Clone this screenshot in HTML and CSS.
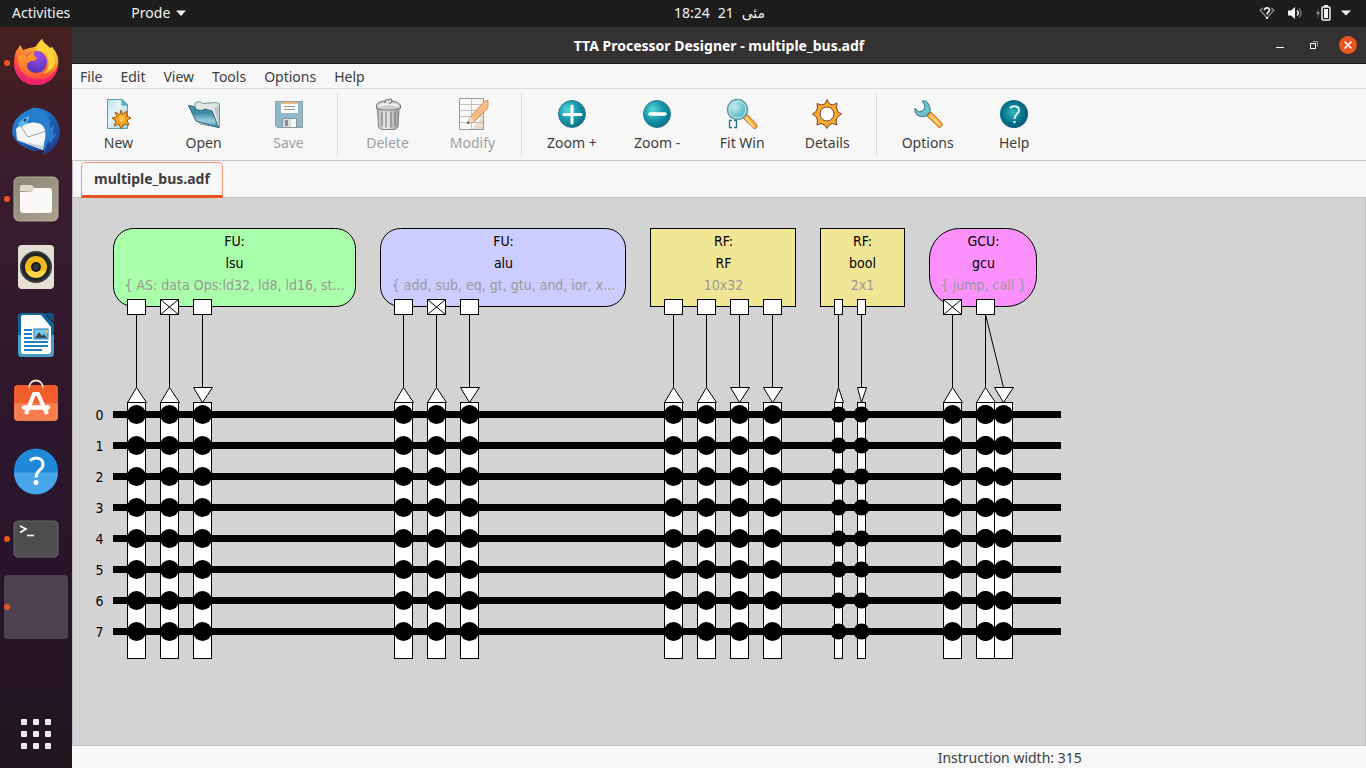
FILE: index.html
```html
<!DOCTYPE html>
<html lang="en">
<head>
<meta charset="utf-8">
<title>TTA Processor Designer - multiple_bus.adf</title>
<link rel="stylesheet" href="styles.css">
</head>
<body>
<div class="desktop">
  <header class="topbar">
    <div class="topbar-left">
      <button class="top-btn" type="button">Activities</button>
      <button class="top-btn app-menu" type="button">Prode
        <svg width="10" height="6" viewBox="0 0 10 6"><path d="M0 0.500h10L5 6z" fill="#f2f2f2"/></svg>
      </button>
    </div>
    <button class="top-btn clock" type="button"><span>18:24</span><span>21</span><span lang="ur">مئی</span></button>
    <button class="top-btn tray" type="button" aria-label="System menu">
      <svg width="16" height="16" viewBox="0 0 16 16" fill="none"><path d="M1 5Q8 0 15 5L8 13z" stroke="#8c8c8c" stroke-width="1.300"/><path d="M5.500 5.200C5.500 2 10.800 2.300 10.500 5.200C10.300 7 8 7 8 9.500" stroke="#1d1d1d" stroke-width="4"/><path d="M5.500 5.200C5.500 2 10.800 2.300 10.500 5.200C10.300 7 8 7 8 9.500" stroke="#eee" stroke-width="1.700"/><path d="M7 12h2v2H7z" fill="#eee"/></svg>
      <svg width="16" height="16" viewBox="0 0 16 16" fill="none"><path d="M1 5.500h3L8 2v12l-4-3.500H1z" fill="#f2f2f2"/><path d="M10 5.500q2.500 2.500 0 5" stroke="#f2f2f2" stroke-width="1.500"/><path d="M12 3.500q4 4.500 0 9" stroke="#777" stroke-width="1.400"/></svg>
      <svg width="16" height="16" viewBox="0 0 16 16"><path d="M4 3L1 9h2l-1 5 3-7H3z" fill="#888"/><path d="M9 0h4v2h-4z" fill="#f2f2f2"/><rect x="7" y="2" width="8" height="13" rx="1" fill="none" stroke="#f2f2f2" stroke-width="1.500"/><path d="M9 4h4v9H9z" fill="#f2f2f2"/></svg>
      <svg width="10" height="6" viewBox="0 0 10 6"><path d="M0 0.500h10L5 5.500z" fill="#f2f2f2"/></svg>
    </button>
  </header>

  <nav class="dock" aria-label="Dock">
    <button class="dock-btn running" type="button" aria-label="Firefox">
      <svg width="48" height="48" viewBox="0 0 48 48">
        <defs>
          <linearGradient id="ff1" x1="0.800" y1="0" x2="0.300" y2="1"><stop offset="0" stop-color="#fff44f"/><stop offset="0.350" stop-color="#ffa22b"/><stop offset="0.700" stop-color="#ff4a3c"/><stop offset="1" stop-color="#e31587"/></linearGradient>
          <linearGradient id="ff3" x1="0.300" y1="0" x2="0.400" y2="1"><stop offset="0" stop-color="#ffa52a"/><stop offset="1" stop-color="#ff5a36"/></linearGradient>
          <radialGradient id="ff2" cx="0.600" cy="0.200" r="0.800"><stop offset="0" stop-color="#a04bf0"/><stop offset="1" stop-color="#5435b4"/></radialGradient>
        </defs>
        <path d="M4 12Q7 9 8 6Q10 8 11 11L14 10C19 8 22 9 24 7C26 4 28 2 30 0C32 5 35 5 38 9L40 8C45 14 47 19 46 26C45 38 36 46 24 46C11 46 2 37 2 24C2 19 3 16 4 12z" fill="url(#ff1)"/>
        <circle cx="24" cy="23" r="11" fill="url(#ff2)"/>
        <path d="M6 17C11 15 13 16 15 18C17 14 20 13 23 12C22 15 21 16 24 18L25 19C24 22 22 22 19 22C17 23 15 24 15 26C15 30 18 33 23 34C31 35 35 28 35 22C38 30 33 39 23 39C12 39 5 29 6 17z" fill="url(#ff3)"/>
        <path d="M24 12C31 10 35 14 36 20C38 25 36 32 31 35C38 33 43 28 43 21C42 14 38 10 34 7C31 6 30 3 30 0C25 5 25 8 24 12z" fill="#ffd33c"/>
        <path d="M3 29C8 39 17 42 27 41C38 40 44 33 46 25C46 37 36 46 24 46C13 46 5 39 3 29z" fill="#f0246b"/>
      </svg>
    </button>
    <button class="dock-btn" type="button" aria-label="Thunderbird">
      <svg width="48" height="48" viewBox="0 0 48 48">
        <defs><linearGradient id="tb" x1="0" y1="0" x2="0.700" y2="1"><stop offset="0" stop-color="#2b93dc"/><stop offset="0.550" stop-color="#1d62b4"/><stop offset="1" stop-color="#203f8e"/></linearGradient></defs>
        <path d="M3 14C8 7 14 3 22 1C35 0 47 10 48 24C48 30 45 36 43 39C40 44 35 45 31 48L32 43L22 44Q3 38 0 26C0 22 1 17 3 14z" fill="url(#tb)"/>
        <path d="M8 18L33 13L35 27L31 43L5 33L4 22z" fill="#f4f5f7"/>
        <path d="M8 18L16 30L34 24" fill="none" stroke="#9ba3ab" stroke-width="1"/>
        <path d="M5 33L31 43L31 39z" fill="#cfd4da"/>
        <path d="M6 18C7 12 12 8 18 5C18 2 21 0 24 1C31 3 40 10 38 22L42 18L41 28L45 25L39 36L36 34L32 45C30 38 35 31 33 23C30 13 23 18 17 13Q11 13 9 20z" fill="#287dce"/>
        <path d="M6 17Q11 10 17 9Q18 16 9 20z" fill="#56b6ed"/>
        <circle cx="13" cy="13" r="1.500" fill="#123e74"/>
      </svg>
    </button>
    <button class="dock-btn running" type="button" aria-label="Files">
      <svg width="48" height="48" viewBox="0 0 48 48"><defs><linearGradient id="fi" x1="0" y1="0" x2="1" y2="1"><stop offset="0" stop-color="#8a8472"/><stop offset="1" stop-color="#aaa491"/></linearGradient></defs><rect x="2" y="2" width="44" height="44" rx="5" fill="url(#fi)" stroke="#b4ae9d"/><path d="M8 16V12Q8 10 10 10H19L23 13H38V18z" fill="#dfdacd"/><path d="M8 17H20L23 13H37Q40 13 40 16V35Q40 38 37 38H11Q8 38 8 35z" fill="#faf9f7"/></svg>
    </button>
    <button class="dock-btn" type="button" aria-label="Rhythmbox">
      <svg width="48" height="48" viewBox="0 0 48 48"><rect x="6" y="2" width="36" height="44" rx="4" fill="#e3dfd4"/><circle cx="24" cy="24" r="16" fill="#3b3c40"/><circle cx="24" cy="24" r="14" fill="#22242b"/><circle cx="24" cy="24" r="11" fill="#f0b91a"/><path d="M14 28A11 11 0 0 0 34 28z" fill="#ffd648"/><circle cx="24" cy="24" r="5" fill="#17191e"/><circle cx="24" cy="24" r="3" fill="#33353a"/></svg>
    </button>
    <button class="dock-btn" type="button" aria-label="LibreOffice Writer">
      <svg width="48" height="48" viewBox="0 0 48 48"><path d="M10 2H32L42 13V42Q42 46 38 46H10Q6 46 6 42V6Q6 2 10 2z" fill="#12649c"/><path d="M6 24H42V42Q42 46 38 46H10Q6 46 6 42z" fill="#469fca"/><path d="M33 2H39Q42 2 42 5V11z" fill="#0b5788"/><path d="M11 4H29L39 16V40Q39 43 36 43H11Q9 43 9 40V7Q9 4 11 4z" fill="#fff"/><path d="M12 19h8M12 23h8M12 27h8M12 31h24M12 35h24M12 39h18" stroke="#1e7eb8" stroke-width="2"/><rect x="22" y="18" width="14" height="10" fill="#7cc7ed" stroke="#1e7eb8"/><path d="M23 27L27 21L30 25L32 23L35 27z" fill="#3f4649"/><path d="M33 19h3v3h-1z" fill="#f7c52b"/></svg>
    </button>
    <button class="dock-btn" type="button" aria-label="Ubuntu Software">
      <svg width="48" height="48" viewBox="0 0 48 48"><defs><linearGradient id="sw" x1="0" y1="0" x2="0" y2="1"><stop offset="0" stop-color="#ee5a28"/><stop offset="0.500" stop-color="#f2632f"/><stop offset="0.510" stop-color="#f57d4e"/><stop offset="1" stop-color="#f37e50"/></linearGradient></defs><rect x="2" y="6" width="44" height="36" rx="4" fill="url(#sw)"/><path d="M17 9C17-1 31-1 31 9" fill="none" stroke="#f7e4c4" stroke-width="1.800"/><path d="M14 35L22 15H26L35 35" fill="none" stroke="#fff" stroke-width="4"/><path d="M12 28.500H36" stroke="#fff" stroke-width="4.500" stroke-linecap="round"/></svg>
    </button>
    <button class="dock-btn" type="button" aria-label="Help">
      <svg width="48" height="48" viewBox="0 0 48 48"><circle cx="24" cy="23.500" r="22" fill="#2188d8"/><path d="M2 25.500H46A22 22 0 0 1 2 25.500z" fill="#46a6e8"/><path d="M18 13.500C23 9.500 31 10.500 31 17.500C31 23.500 24 22.500 24 30.500" fill="none" stroke="#fff" stroke-width="3"/><circle cx="24" cy="35.500" r="2.500" fill="#fff"/></svg>
    </button>
    <button class="dock-btn running" type="button" aria-label="Terminal">
      <svg width="48" height="48" viewBox="0 0 48 48"><rect x="2" y="6" width="44" height="36" rx="4" fill="#4d4d4d" stroke="#676767"/><path d="M8 11L14 14L8 17.500" fill="none" stroke="#fff" stroke-width="1.600"/><path d="M15 20.500h7" stroke="#fff" stroke-width="1.600"/></svg>
    </button>
    <button class="dock-btn running active" type="button" aria-label="Prode"></button>
    <button class="dock-btn apps" type="button" aria-label="Show Applications">
      <svg width="30" height="30" viewBox="0 0 30 30" fill="#f0eeec"><rect width="6" height="6" rx="1"/><rect x="12" width="6" height="6" rx="1"/><rect x="24" width="6" height="6" rx="1"/><rect y="12" width="6" height="6" rx="1"/><rect x="12" y="12" width="6" height="6" rx="1"/><rect x="24" y="12" width="6" height="6" rx="1"/><rect y="24" width="6" height="6" rx="1"/><rect x="12" y="24" width="6" height="6" rx="1"/><rect x="24" y="24" width="6" height="6" rx="1"/></svg>
    </button>
  </nav>

  <main class="window">
    <div class="titlebar">
      <h1 class="title">TTA Processor Designer - multiple_bus.adf</h1>
      <div class="controls">
        <button class="ctl" type="button" aria-label="Minimize"><svg width="18" height="18" viewBox="0 0 18 18"><path d="M5 11h8v1H5z" fill="#fff"/></svg></button>
        <button class="ctl" type="button" aria-label="Restore"><svg width="18" height="18" viewBox="0 0 18 18" fill="none"><path d="M7.500 5.500h5v5" stroke="#999"/><rect x="5.500" y="7.500" width="5" height="5" stroke="#fff"/></svg></button>
        <button class="ctl" type="button" aria-label="Close"><svg width="18" height="18" viewBox="0 0 18 18"><circle cx="9" cy="9" r="9" fill="#e95420"/><path d="M5.500 5.500l7 7m0-7l-7 7" stroke="#fff" stroke-width="1.600"/></svg></button>
      </div>
    </div>

    <nav class="menubar" aria-label="Menu">
      <button class="menu" type="button">File</button>
      <button class="menu" type="button">Edit</button>
      <button class="menu" type="button">View</button>
      <button class="menu" type="button">Tools</button>
      <button class="menu" type="button">Options</button>
      <button class="menu" type="button">Help</button>
    </nav>

    <div class="toolbar" role="toolbar">
      <button class="tool" type="button">
        <svg width="32" height="32" viewBox="0 0 32 32"><defs><linearGradient id="pg" x1="0" y1="0" x2="1" y2="1"><stop offset="0" stop-color="#b9e2ec"/><stop offset="0.400" stop-color="#e6f5f8"/><stop offset="1" stop-color="#93cfdd"/></linearGradient></defs><path d="M4.500 1.500H19L24.500 7V30.500H4.500z" fill="url(#pg)" stroke="#5fa0ad"/><path d="M19 1.500V7H24.500z" fill="#58c2d2" stroke="#4a98a6"/><path d="M18 12L20 16L24 13L23.500 18L28 20L24 22L26 27L21 26L18 31L16 26L11 28L13 23L9 20L14 19L12 14L17 17z" fill="#f6a21c" stroke="#a55a16"/><circle cx="18.500" cy="21" r="3" fill="#ffc34c"/></svg>
        <span>New</span></button>
      <button class="tool" type="button">
        <svg width="32" height="32" viewBox="0 0 32 32"><defs><linearGradient id="fo" x1="0" y1="0" x2="0" y2="1"><stop offset="0" stop-color="#3d93ac"/><stop offset="0.350" stop-color="#3d8fa8"/><stop offset="0.700" stop-color="#9fd0dd"/><stop offset="1" stop-color="#3b8ba3"/></linearGradient></defs><path d="M7 9V5L11 3.500L15 5.500L28 4.500L31.500 6V29.500L12 26z" fill="#e3e6e7" stroke="#79949b"/><path d="M26 10L31 7V28z" fill="#c3c8ca"/><path d="M0.500 7.500L6 8.500L9 12L14 12.500L17 11L24 13L30.500 29.500L8 23z" fill="url(#fo)" stroke="#2f6577"/></svg>
        <span>Open</span></button>
      <button class="tool" type="button" disabled>
        <svg width="32" height="32" viewBox="0 0 32 32"><path d="M2.500 3.500H29.500V29.500H4.500L2.500 27.500z" fill="#8fb8c8" stroke="#8ca0a8"/><path d="M8 4h17v11H8z" fill="#f8f8f8"/><path d="M8 4h17v2H8z" fill="#eeb77e"/><path d="M11 8.500h11M11 11.500h11" stroke="#9a9a9a"/><rect x="9.500" y="20.500" width="14" height="9" fill="#dcdcdc" stroke="#8999a0"/><path d="M12 22h3v6h-3z" fill="#8b8b9b"/><path d="M18 21h5v8h-5z" fill="#f5f5f5"/></svg>
        <span>Save</span></button>
      <div class="sep"></div>
      <button class="tool" type="button" disabled>
        <svg width="32" height="32" viewBox="0 0 32 32"><defs><linearGradient id="tr" x1="0" y1="0" x2="1" y2="0"><stop offset="0" stop-color="#b5b5b5"/><stop offset="0.400" stop-color="#efefef"/><stop offset="1" stop-color="#999"/></linearGradient></defs><path d="M5.500 11H27L26 29Q25 31 22 31.500H10Q7 31 6.500 29z" fill="url(#tr)" stroke="#858585"/><path d="M10 14v14M14 14v15M19 14v15M23 14v14" stroke="#8a8a8a" stroke-width="1.400" stroke-linecap="round"/><path d="M4.500 10.500V7Q6 3.500 12 3H20Q26 3.500 28.500 7V10.500Q16 14 4.500 10.500z" fill="#ccc" stroke="#777"/><path d="M7 8Q15 4 26 8" fill="none" stroke="#f3f3f3" stroke-width="2"/><path d="M13 5Q13 0 16 2Q20-1 20 4L17 6" fill="#ddd" stroke="#666"/></svg>
        <span>Delete</span></button>
      <button class="tool" type="button" disabled>
        <svg width="32" height="32" viewBox="0 0 32 32"><path d="M2.500 0.500H26.500V31.500H2.500z" fill="#faf9f7" stroke="#989898"/><path d="M15 31L26 18V31z" fill="#eadccb"/><path d="M3 6.500h23M3 12.500h23M3 18.500h23M3 24.500h23M14.500 1v30" stroke="#c2c4c6"/><path d="M10 26L13 19L27 4L31 2V10L18 23z" fill="#f6bd82" stroke="#c4946e"/><path d="M10 26L13 19L17 23z" fill="#f5ddc9"/><path d="M10 26l1-3 2 2z" fill="#555"/></svg>
        <span>Modify</span></button>
      <div class="sep"></div>
      <button class="tool" type="button">
        <svg width="32" height="32" viewBox="0 0 32 32"><defs><radialGradient id="zc" cx="0.350" cy="0.350" r="0.700"><stop offset="0" stop-color="#58dada"/><stop offset="0.500" stop-color="#1a9cae"/><stop offset="1" stop-color="#08718c"/></radialGradient></defs><circle cx="16" cy="16" r="13.500" fill="url(#zc)" stroke="#317b91"/><path d="M16 8v17M8 16.500h17" stroke="#fff" stroke-width="3" stroke-linecap="round"/></svg>
        <span>Zoom +</span></button>
      <button class="tool" type="button">
        <svg width="32" height="32" viewBox="0 0 32 32"><circle cx="16" cy="16" r="13.500" fill="url(#zc)" stroke="#317b91"/><path d="M9 16h15" stroke="#fff" stroke-width="3.500" stroke-linecap="round"/></svg>
        <span>Zoom -</span></button>
      <button class="tool" type="button">
        <svg width="32" height="32" viewBox="0 0 32 32"><defs><radialGradient id="ln" cx="0.350" cy="0.350" r="0.700"><stop offset="0" stop-color="#c5edf1"/><stop offset="1" stop-color="#45abb9"/></radialGradient></defs><path d="M17 20L21 16L31 27Q31 31 28 30.500z" fill="#f7ae3f" stroke="#c46c17"/><path d="M20 20l8 9" stroke="#ffdb91" stroke-width="2"/><circle cx="11.500" cy="11.500" r="10" fill="url(#ln)" stroke="#659ca6" stroke-width="1.500"/><circle cx="11.500" cy="11.500" r="8.500" fill="none" stroke="#d2f0f4"/><path d="M6 22.500H3.500V29.500H6M8 22.500h2.500V29.500H8" fill="none" stroke="#24737e" stroke-width="1.300"/></svg>
        <span>Fit Win</span></button>
      <button class="tool" type="button">
        <svg width="32" height="32" viewBox="0 0 32 32"><path d="M14 6L16 1.500L18.500 6L22 7L26 5L25.500 10L27 14L30.500 16L27 18.500L25 22L26 27L21.500 25.500L18 27L16 30.500L13.500 27L10 25.500L6 27L6.500 22L5 18.500L1.500 16L5 13.500L6.500 10L6 5.500L10 7z" fill="#f9aa2b" stroke="#7b4431" stroke-linejoin="round"/><circle cx="16" cy="16" r="7" fill="#fff" stroke="#7b4431"/></svg>
        <span>Details</span></button>
      <div class="sep"></div>
      <button class="tool" type="button">
        <svg width="32" height="32" viewBox="0 0 32 32"><path d="M15 18L19 14L30 25Q31 29 27 29.500z" fill="#f9ad3e" stroke="#c76f1b"/><path d="M18 17l10 10" stroke="#ffd68b" stroke-width="2"/><path d="M10 3Q15 2 17 7Q19 11 18 14L14 18Q9 20 5 17Q2 14 3 10L7 14L12 12L13 7z" fill="#6fbec8" stroke="#33848f"/></svg>
        <span>Options</span></button>
      <button class="tool" type="button">
        <svg width="32" height="32" viewBox="0 0 32 32"><defs><radialGradient id="hp" cx="0.450" cy="0.450" r="0.500"><stop offset="0" stop-color="#31b5b8"/><stop offset="0.700" stop-color="#047490"/><stop offset="1" stop-color="#07617d"/></radialGradient></defs><circle cx="16" cy="16" r="14" fill="url(#hp)"/><path d="M12 10C15 7 21 8 21 12C21 16 16.500 16 16.500 21" fill="none" stroke="#e2f6f4" stroke-width="2"/><path d="M15.500 23h2v2h-2z" fill="#fff"/></svg>
        <span>Help</span></button>
    </div>

    <div class="tabs" role="tablist">
      <button class="tab" type="button" role="tab" aria-selected="true">multiple_bus.adf</button>
    </div>

    <section class="canvas" aria-label="Architecture">
      <svg class="diagram" width="1000" height="480" viewBox="0 0 1000 480">
        <defs>
          <g id="box"><rect class="shape" x="-9" y="101" width="18" height="15"/></g>
          <g id="cross"><use href="#box"/><path class="line" d="M-9 101L9 116M9 101L-9 116"/></g>
          <g id="bus-sock"><rect class="shape" x="-9" y="204" width="18" height="256"/><g id="dots"><circle cy="216" r="9.500"/><circle cy="247" r="9.500"/><circle cy="278" r="9.500"/><circle cy="309" r="9.500"/><circle cy="340" r="9.500"/><circle cy="371" r="9.500"/><circle cy="402" r="9.500"/><circle cy="433" r="9.500"/></g></g>
          <g id="up"><use href="#bus-sock"/><path class="line" d="M0 116V189"/><path class="shape" d="M0 189L-9 204H10z"/></g>
          <g id="tip"><path class="shape" d="M-9 189H10L0 204z"/></g>
          <g id="down"><use href="#bus-sock"/><path class="line" d="M0 116V189"/><use href="#tip"/></g>
          <g id="thin"><rect class="shape" x="-4" y="101" width="8" height="15"/><path class="line" d="M0 116V189"/><rect class="shape" x="-4" y="204" width="8" height="256"/><circle cy="216" r="8"/><circle cy="247" r="8"/><circle cy="278" r="8"/><circle cy="309" r="8"/><circle cy="340" r="8"/><circle cy="371" r="8"/><circle cy="402" r="8"/><circle cy="433" r="8"/></g>
        </defs>
        <g transform="translate(0.500 0.500)">
          <g class="names">
            <rect class="shape lsu" x="40" y="30" width="242" height="78" rx="20"/>
            <text x="161" y="47">FU:</text><text x="161" y="69">lsu</text><text class="dim" x="161" y="91">{ AS: data Ops:ld32, ld8, ld16, st...</text>
            <rect class="shape alu" x="307" y="30" width="245" height="78" rx="20"/>
            <text x="430" y="47">FU:</text><text x="430" y="69">alu</text><text class="dim" x="430" y="91">{ add, sub, eq, gt, gtu, and, ior, x...</text>
            <rect class="shape rf" x="577" y="30" width="145" height="78"/>
            <text x="650" y="47">RF:</text><text x="650" y="69">RF</text><text class="dim" x="650" y="91">10x32</text>
            <rect class="shape rf" x="747" y="30" width="84" height="78"/>
            <text x="789" y="47">RF:</text><text x="789" y="69">bool</text><text class="dim" x="789" y="91">2x1</text>
            <rect class="shape gcu" x="856" y="30" width="107" height="78" rx="30"/>
            <text x="910" y="47">GCU:</text><text x="910" y="69">gcu</text><text class="dim" x="910" y="91">{ jump, call }</text>
          </g>
          <g class="names">
            <text x="26" y="221">0</text><text x="26" y="252">1</text><text x="26" y="283">2</text><text x="26" y="314">3</text><text x="26" y="345">4</text><text x="26" y="376">5</text><text x="26" y="407">6</text><text x="26" y="438">7</text>
          </g>
          <use href="#up" x="63"/><use href="#box" x="63"/>
          <use href="#up" x="96"/><use href="#cross" x="96"/>
          <use href="#down" x="129"/><use href="#box" x="129"/>
          <use href="#up" x="330"/><use href="#box" x="330"/>
          <use href="#up" x="363"/><use href="#cross" x="363"/>
          <use href="#down" x="396"/><use href="#box" x="396"/>
          <use href="#up" x="600"/><use href="#box" x="600"/>
          <use href="#up" x="633"/><use href="#box" x="633"/>
          <use href="#down" x="666"/><use href="#box" x="666"/>
          <use href="#down" x="699"/><use href="#box" x="699"/>
          <use href="#thin" x="765"/><path class="shape" d="M765 189L761 204H770z"/>
          <use href="#thin" x="788"/><path class="shape" d="M784 189H793L788 204z"/>
          <use href="#up" x="879"/><use href="#cross" x="879"/>
          <use href="#up" x="912"/><use href="#box" x="912"/>
          <use href="#bus-sock" x="930"/><use href="#dots" x="912"/><path class="line" d="M912 116L930 189"/><use href="#tip" x="930"/>
          <path class="bus" d="M39.500 216h948M39.500 247h948M39.500 278h948M39.500 309h948M39.500 340h948M39.500 371h948M39.500 402h948M39.500 433h948"/>
        </g>
      </svg>
    </section>

    <footer class="status"><span></span><span>Instruction width: 315</span></footer>
  </main>
</div>
</body>
</html>
```

FILE: styles.css
```css
* { box-sizing: border-box; }

body {
  margin: 0;
  font-family: "Noto Sans", "DejaVu Sans", sans-serif;
  font-size: 14px;
  line-height: 20px;
  color: #3d3d3d;
}

button {
  margin: 0;
  padding: 0;
  border: 0;
  background: none;
  color: inherit;
  font: inherit;
}

svg { display: block; flex: none; }

.desktop {
  display: grid;
  grid-template: 27px 1fr / 72px 1fr;
  min-height: 100vh;
}

/* Top panel */
.topbar {
  grid-column: 1 / 3;
  display: grid;
  grid-template-columns: 1fr auto 1fr;
  align-items: center;
  padding: 0 15px 2px 12px;
  background: #1d1d1d;
  color: #f2f2f2;
}
.topbar-left { display: flex; gap: 61px; }
.top-btn { display: flex; align-items: center; }
.app-menu { gap: 6px; }
.clock { gap: 8px; padding-left: 76px; }
.tray { justify-self: end; gap: 12px; }
.tray svg:last-child { margin-left: -2px; }

/* Dock */
.dock {
  display: flex;
  flex-direction: column;
  align-items: center;
  gap: 4px;
  padding: 4px 0 2px;
  background: linear-gradient(#47201f 0, #3a1c2e 160px, #2c162c 420px, #28142a 560px, #22161e 100%);
}
.dock-btn {
  position: relative;
  display: flex;
  align-items: center;
  justify-content: center;
  width: 64px;
  height: 64px;
  border-radius: 4px;
}
.dock-btn.active { background: #4f414f; }
.dock-btn.running::before {
  content: "";
  position: absolute;
  left: 0;
  top: 29px;
  width: 6px;
  height: 6px;
  border-radius: 50%;
  background: #e95420;
}
.dock-btn.apps { margin-top: auto; }

/* Application window */
.window {
  display: grid;
  grid-template-rows: 37px 25px 72px 37px 1fr 22px;
  min-width: 0;
  background: #f7f7f7;
}
.titlebar {
  display: grid;
  grid-template-columns: 1fr auto 1fr;
  align-items: center;
  padding: 0 9px;
  background: #343132;
  border-bottom: 1px solid #1d1a1b;
  color: #fff;
}
.title {
  grid-column: 2;
  margin: 0;
  padding-top: 2px;
  font-size: 14px;
  font-weight: 700;
}
.controls { display: flex; gap: 16px; justify-self: end; }

.menubar {
  display: flex;
  gap: 2px;
  padding-top: 2px;
  border-bottom: 1px solid #dadada;
}
.menu { padding: 0 8px; }

.toolbar {
  display: flex;
  padding: 4px;
  border-bottom: 1px solid #c4c4c4;
}
.tool {
  display: flex;
  flex-direction: column;
  align-items: center;
  gap: 3px;
  min-width: 85px;
  padding: 5px 18px 0;
}
.tool:disabled { color: #a0a0a0; }
.sep {
  width: 1px;
  margin: 0 7px 0 6px;
  background: #dadada;
}

.tabs {
  display: flex;
  padding: 1px 9px 0 8px;
  border-left: 1px solid #bfbfbf;
  border-bottom: 1px solid #c4c4c4;
}
.tab {
  height: 36px;
  padding: 0 12px;
  border: 1px solid #f0977a;
  border-bottom: 3px solid #e95420;
  border-radius: 5px 5px 0 0;
  font-weight: 700;
}

.canvas {
  min-width: 0;
  overflow: hidden;
  border: solid #c0c0c0;
  border-width: 0 1px 1px;
  background: #d3d3d3;
}
.status {
  display: grid;
  grid-template-columns: 2fr 1fr;
  align-items: center;
  padding: 2px 0 0 9px;
}

/* Bus diagram */
.shape { fill: #fff; stroke: #000; }
.line { fill: none; stroke: #000; }
.bus { fill: none; stroke: #000; stroke-width: 7px; }
.lsu { fill: #aaffaa; }
.alu { fill: #ccccff; }
.rf { fill: #f0e696; }
.gcu { fill: #fc90fc; }
.names text {
  font-family: "DejaVu Sans Condensed", "DejaVu Sans", sans-serif;
  font-size: 14px;
  text-anchor: middle;
}
.names .dim { fill: #999; }
```
